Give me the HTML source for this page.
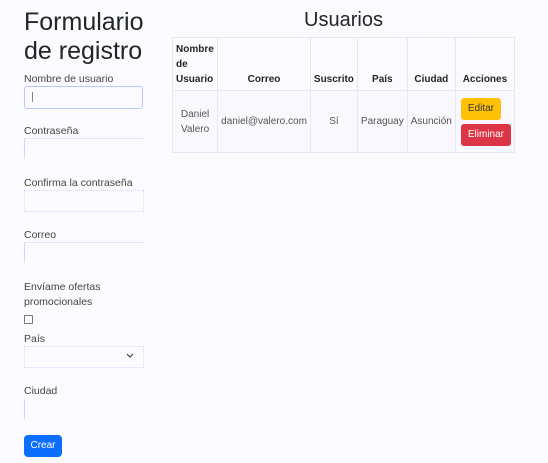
<!DOCTYPE html>
<html><head><meta charset="utf-8"><style>
body{margin:0;width:548px;height:463px;background:#fbfbff;font-family:"Liberation Sans",sans-serif;color:#212529;position:relative;overflow:hidden}
.a{position:absolute}
h1{position:absolute;left:24px;top:8px;margin:0;font-size:25px;font-weight:500;line-height:29px;color:#212529}
.l{position:absolute;left:24px;font-size:10.5px;color:#444}
.in{position:absolute;left:24px;width:118px;height:20px;border-left:1px solid #d4d4ff;border-top:1px solid #e0e0ff}
table{position:absolute;left:172px;top:37px;width:343px;border-collapse:collapse;font-size:10px}
th,td{border:1px solid #e6e6f8;text-align:center;padding:3px}
th{font-weight:bold;vertical-align:bottom;height:46px;line-height:15px}
td{color:#555;height:55px;background:#f8f8fe;line-height:15px}
.btn{display:inline-block;border-radius:3px;padding:5px 7px;font-size:10px;line-height:12px}
</style></head><body>
<h1>Formulario<br>de registro</h1>
<div class="l" style="top:73px">Nombre de usuario</div>
<div class="a" style="left:24px;top:86px;width:117px;height:21px;border:1px solid #b8c8ff;border-radius:3px"></div>
<div class="a" style="left:32px;top:92px;width:1px;height:10px;background:#888"></div>
<div class="l" style="top:125px">Contraseña</div>
<div class="in" style="top:138px"></div>
<div class="l" style="top:177px">Confirma la contraseña</div>
<div class="in" style="top:190px;border:1px dotted #d8d8ff"></div>
<div class="l" style="top:229px">Correo</div>
<div class="in" style="top:242px"></div>
<div class="l" style="top:280px;line-height:15px">Envíame ofertas<br>promocionales</div>
<div class="a" style="left:24px;top:315px;width:7px;height:7px;border:1px solid #777;border-radius:1px"></div>
<div class="l" style="top:333px">País</div>
<div class="in" style="top:346px;border:1px dotted #d8d8ff"></div>
<svg class="a" style="left:126px;top:353px" width="8" height="5" viewBox="0 0 8 5"><path d="M1 1l3 3 3-3" fill="none" stroke="#444" stroke-width="1.2"/></svg>
<div class="l" style="top:385px">Ciudad</div>
<div class="in" style="top:399px;border-top:none"></div>
<div class="a" style="left:24px;top:435px;width:38px;height:22px;background:#0d6efd;border-radius:4px;color:#fff;font-size:10px;text-align:center;line-height:22px">Crear</div>
<div class="a" style="left:172px;top:9px;width:343px;text-align:center;font-size:20px;color:#212529">Usuarios</div>
<table><tr><th style="text-align:left;width:40px">Nombre<br>de<br>Usuario</th><th>Correo</th><th>Suscrito</th><th>País</th><th>Ciudad</th><th>Acciones</th></tr>
<tr><td>Daniel<br>Valero</td><td>daniel@valero.com</td><td>Sí</td><td>Paraguay</td><td>Asunción</td><td style="text-align:left;padding-left:5px"><span class="btn" style="background:#ffc107;color:#333;margin-bottom:4px">Editar</span><br><span class="btn" style="background:#dc3545;color:#fff">Eliminar</span></td></tr></table>
</body></html>
